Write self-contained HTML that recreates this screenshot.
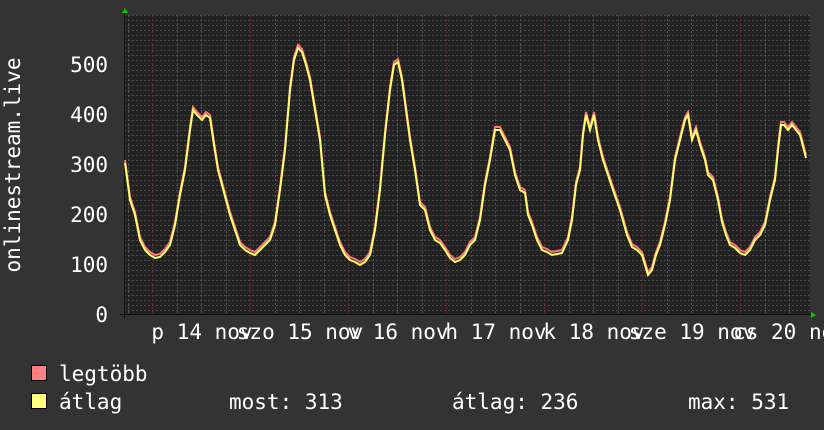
<!DOCTYPE html>
<html><head><meta charset="utf-8"><style>
html,body{margin:0;padding:0;background:#333;}
svg{display:block;font-family:"DejaVu Sans Mono","Liberation Mono",monospace;}
</style></head><body>
<svg width="824" height="430" viewBox="0 0 824 430" xmlns="http://www.w3.org/2000/svg">
<defs>
<pattern id="hm" x="0" y="0" width="4" height="5" patternUnits="userSpaceOnUse">
<rect x="0" y="0" width="2" height="1" fill="#4a4a4a"/>
</pattern>
</defs>
<rect width="824" height="430" fill="#333"/>
<rect x="124" y="15" width="686" height="300" fill="#222"/>
<rect x="124" y="15" width="686" height="300" fill="url(#hm)"/>
<g stroke="#555" stroke-width="1" stroke-dasharray="2,2">
<line x1="128.5" y1="15" x2="128.5" y2="315"/>
<line x1="177.5" y1="15" x2="177.5" y2="315"/>
<line x1="201.5" y1="15" x2="201.5" y2="315"/>
<line x1="226.5" y1="15" x2="226.5" y2="315"/>
<line x1="275.5" y1="15" x2="275.5" y2="315"/>
<line x1="299.5" y1="15" x2="299.5" y2="315"/>
<line x1="324.5" y1="15" x2="324.5" y2="315"/>
<line x1="373.5" y1="15" x2="373.5" y2="315"/>
<line x1="397.5" y1="15" x2="397.5" y2="315"/>
<line x1="422.5" y1="15" x2="422.5" y2="315"/>
<line x1="471.5" y1="15" x2="471.5" y2="315"/>
<line x1="495.5" y1="15" x2="495.5" y2="315"/>
<line x1="520.5" y1="15" x2="520.5" y2="315"/>
<line x1="569.5" y1="15" x2="569.5" y2="315"/>
<line x1="593.5" y1="15" x2="593.5" y2="315"/>
<line x1="618.5" y1="15" x2="618.5" y2="315"/>
<line x1="667.5" y1="15" x2="667.5" y2="315"/>
<line x1="691.5" y1="15" x2="691.5" y2="315"/>
<line x1="716.5" y1="15" x2="716.5" y2="315"/>
<line x1="765.5" y1="15" x2="765.5" y2="315"/>
<line x1="789.5" y1="15" x2="789.5" y2="315"/>
</g>
<g stroke="#6a2e2e" stroke-width="1" stroke-dasharray="2,2">
<line x1="124" y1="65.5" x2="810" y2="65.5"/>
<line x1="124" y1="115.5" x2="810" y2="115.5"/>
<line x1="124" y1="165.5" x2="810" y2="165.5"/>
<line x1="124" y1="215.5" x2="810" y2="215.5"/>
<line x1="124" y1="265.5" x2="810" y2="265.5"/>
<line x1="152.5" y1="15" x2="152.5" y2="315"/>
<line x1="250.5" y1="15" x2="250.5" y2="315"/>
<line x1="348.5" y1="15" x2="348.5" y2="315"/>
<line x1="446.5" y1="15" x2="446.5" y2="315"/>
<line x1="544.5" y1="15" x2="544.5" y2="315"/>
<line x1="642.5" y1="15" x2="642.5" y2="315"/>
<line x1="740.5" y1="15" x2="740.5" y2="315"/>
</g>
<line x1="124.5" y1="12" x2="124.5" y2="318" stroke="#111" stroke-width="1"/>
<line x1="120" y1="314.5" x2="812" y2="314.5" stroke="#111" stroke-width="1"/>
<polygon points="122,13 125,8 128,13" fill="#0c0"/>
<polygon points="811,312 816,315 811,318" fill="#0c0"/>
<g fill="none" stroke-width="2" stroke-linejoin="miter">
<polyline transform="translate(0,-3)" stroke="#ff7878" points="125,163 130,200 135,215 140,240 145,250 150,255 155,258 160,257 165,252 170,245 175,225 180,195 185,170 190,130 193,110 197,115 202,120 206,115 210,118 214,145 218,170 222,185 226,200 230,215 235,230 240,245 245,250 250,253 255,255 260,250 265,245 270,240 275,225 280,190 285,150 290,90 294,60 298,48 302,52 306,65 310,80 315,110 320,140 325,195 330,215 335,230 340,245 345,255 350,260 355,262 360,265 365,262 370,255 375,230 380,190 385,135 390,90 394,65 398,62 402,80 406,110 410,140 415,170 420,205 425,210 430,230 435,240 440,243 445,250 450,258 455,262 460,260 465,255 470,245 475,240 480,220 485,185 490,160 495,130 500,130 505,140 510,150 515,175 520,190 525,193 528,215 532,225 537,240 542,250 547,252 552,255 557,254 562,253 568,240 572,220 576,185 580,170 583,135 586,115 590,130 594,115 598,140 603,160 608,175 613,190 620,210 627,235 632,247 637,250 642,255 648,275 652,270 656,255 660,245 665,225 670,200 675,160 680,140 685,120 688,115 692,140 696,130 700,145 705,160 708,175 713,180 718,200 722,222 726,235 730,245 735,248 740,253 745,255 750,250 755,240 760,235 765,225 770,200 775,180 778,150 781,125 784,125 788,130 792,125 796,130 800,135 806,158"/>
<polyline stroke="#ffff70" points="125,163 130,200 135,215 140,240 145,250 150,255 155,258 160,257 165,252 170,245 175,225 180,195 185,170 190,130 193,110 197,115 202,120 206,115 210,118 214,145 218,170 222,185 226,200 230,215 235,230 240,245 245,250 250,253 255,255 260,250 265,245 270,240 275,225 280,190 285,150 290,90 294,60 298,48 302,52 306,65 310,80 315,110 320,140 325,195 330,215 335,230 340,245 345,255 350,260 355,262 360,265 365,262 370,255 375,230 380,190 385,135 390,90 394,65 398,62 402,80 406,110 410,140 415,170 420,205 425,210 430,230 435,240 440,243 445,250 450,258 455,262 460,260 465,255 470,245 475,240 480,220 485,185 490,160 495,130 500,130 505,140 510,150 515,175 520,190 525,193 528,215 532,225 537,240 542,250 547,252 552,255 557,254 562,253 568,240 572,220 576,185 580,170 583,135 586,115 590,130 594,115 598,140 603,160 608,175 613,190 620,210 627,235 632,247 637,250 642,255 648,275 652,270 656,255 660,245 665,225 670,200 675,160 680,140 685,120 688,115 692,140 696,130 700,145 705,160 708,175 713,180 718,200 722,222 726,235 730,245 735,248 740,253 745,255 750,250 755,240 760,235 765,225 770,200 775,180 778,150 781,125 784,125 788,130 792,125 796,130 800,135 806,158"/>
</g>
<g fill="#fff" font-size="21" text-anchor="end">
<text x="108" y="72">500</text>
<text x="108" y="122">400</text>
<text x="108" y="172">300</text>
<text x="108" y="222">200</text>
<text x="108" y="272">100</text>
<text x="108" y="322">0</text>
</g>
<text transform="translate(20,165) rotate(-90)" fill="#fff" font-size="21" text-anchor="middle">onlinestream.live</text>
<g fill="#fff" font-size="21" text-anchor="middle">
<text x="202" y="339">p 14 nov</text>
<text x="300" y="339">szo 15 nov</text>
<text x="398" y="339">v 16 nov</text>
<text x="496" y="339">h 17 nov</text>
<text x="594" y="339">k 18 nov</text>
<text x="692" y="339">sze 19 nov</text>
<text x="790" y="339">cs 20 nov</text>
</g>
<rect x="31.5" y="365.5" width="15" height="15" fill="#ff8080" stroke="#000"/>
<rect x="31.5" y="393.5" width="15" height="15" fill="#ffff80" stroke="#000"/>
<g fill="#fff" font-size="21">
<text x="59" y="381">legtöbb</text>
<text x="59" y="409">átlag</text>
<text x="229" y="409">most: 313</text>
<text x="452" y="409">átlag: 236</text>
<text x="688" y="409">max: 531</text>
</g>
</svg>
</body></html>
